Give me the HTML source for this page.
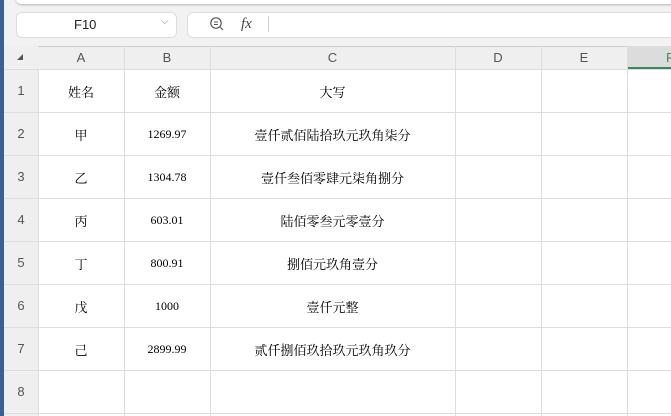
<!DOCTYPE html><html><head><meta charset="utf-8"><style>
*{margin:0;padding:0;box-sizing:border-box}
body{width:671px;height:416px;overflow:hidden;background:#f2f2f2;position:relative;font-family:"Liberation Sans",sans-serif}
.a{position:absolute}
.h{position:absolute;display:flex;align-items:center;justify-content:center;color:#555;font-size:13px}
.c{position:absolute;display:flex;align-items:center;justify-content:center;font-family:"Liberation Serif","Noto Serif CJK SC",serif;font-size:13px;color:#000;padding-top:2px}
</style></head><body>
<div class="a" style="left:0;top:0;width:4px;height:416px;background:#3d5f95"></div>
<div class="a" style="left:16px;top:-6px;width:660px;height:10px;background:#fff;border-radius:6px;box-shadow:0 1px 2px rgba(0,0,0,.25)"></div>
<div class="a" style="left:16px;top:12px;width:161px;height:26px;background:#fff;border:1px solid #ddd;border-radius:6px"></div>
<div class="a" style="left:74px;top:17px;font-size:13px;color:#222">F10</div>
<div class="a" style="left:161px;top:16px;font-size:10px;color:#888">⌵</div>
<div class="a" style="left:187px;top:12px;width:490px;height:26px;background:#fff;border:1px solid #ddd;border-radius:6px"></div>
<svg class="a" style="left:209px;top:16px" width="16" height="16" viewBox="0 0 16 16"><circle cx="7" cy="7" r="5.2" fill="none" stroke="#555" stroke-width="1.2"/><path d="M11 11l3 3M5 6h4M5 8.5h4" stroke="#555" stroke-width="1.1"/></svg>
<div class="a" style="left:241px;top:16px;font-family:'Liberation Serif',serif;font-style:italic;font-size:15px;color:#444">fx</div>
<div class="a" style="left:268px;top:16px;width:1px;height:16px;background:#ccc"></div>
<div class="a" style="left:4px;top:46px;width:667px;height:370px;background:#fff"></div>
<div class="a" style="left:4px;top:46px;width:667px;height:23px;background:#efefef;border-top:1px solid #ccc"></div>
<div class="a" style="left:4px;top:46px;width:34px;height:370px;background:#efefef"></div>
<div class="a" style="left:627px;top:46px;width:44px;height:23px;background:#dcdcdc;border-bottom:2px solid #3c8a5a"></div>
<div class="a" style="left:17px;top:54px;width:0;height:0;border-left:6px solid transparent;border-bottom:6px solid #555"></div>
<div class="h" style="left:38px;top:46px;width:86px;height:23px">A</div>
<div class="h" style="left:124px;top:46px;width:86px;height:23px">B</div>
<div class="h" style="left:210px;top:46px;width:245px;height:23px">C</div>
<div class="h" style="left:455px;top:46px;width:86px;height:23px">D</div>
<div class="h" style="left:541px;top:46px;width:86px;height:23px">E</div>
<div class="h" style="left:660px;top:46px;width:20px;height:23px;color:#3c8a5a">F</div>
<div class="a" style="left:38px;top:69px;width:1px;height:347px;background:#ddd"></div>
<div class="a" style="left:124px;top:46px;width:1px;height:370px;background:#ddd"></div>
<div class="a" style="left:210px;top:46px;width:1px;height:370px;background:#ddd"></div>
<div class="a" style="left:455px;top:46px;width:1px;height:370px;background:#ddd"></div>
<div class="a" style="left:541px;top:46px;width:1px;height:370px;background:#ddd"></div>
<div class="a" style="left:627px;top:46px;width:1px;height:370px;background:#ddd"></div>
<div class="a" style="left:4px;top:69px;width:667px;height:1px;background:#ddd"></div>
<div class="a" style="left:4px;top:112px;width:667px;height:1px;background:#ddd"></div>
<div class="a" style="left:4px;top:155px;width:667px;height:1px;background:#ddd"></div>
<div class="a" style="left:4px;top:198px;width:667px;height:1px;background:#ddd"></div>
<div class="a" style="left:4px;top:241px;width:667px;height:1px;background:#ddd"></div>
<div class="a" style="left:4px;top:284px;width:667px;height:1px;background:#ddd"></div>
<div class="a" style="left:4px;top:327px;width:667px;height:1px;background:#ddd"></div>
<div class="a" style="left:4px;top:370px;width:667px;height:1px;background:#ddd"></div>
<div class="a" style="left:4px;top:413px;width:667px;height:1px;background:#ddd"></div>
<div class="h" style="left:4px;top:69px;width:34px;height:43px">1</div>
<div class="h" style="left:4px;top:112px;width:34px;height:43px">2</div>
<div class="h" style="left:4px;top:155px;width:34px;height:43px">3</div>
<div class="h" style="left:4px;top:198px;width:34px;height:43px">4</div>
<div class="h" style="left:4px;top:241px;width:34px;height:43px">5</div>
<div class="h" style="left:4px;top:284px;width:34px;height:43px">6</div>
<div class="h" style="left:4px;top:327px;width:34px;height:43px">7</div>
<div class="h" style="left:4px;top:370px;width:34px;height:43px">8</div>
<div class="c" style="left:38px;top:69px;width:86px;height:43px">姓名</div>
<div class="c" style="left:124px;top:69px;width:86px;height:43px">金额</div>
<div class="c" style="left:210px;top:69px;width:245px;height:43px">大写</div>
<div class="c" style="left:38px;top:112px;width:86px;height:43px">甲</div>
<div class="c" style="left:124px;top:112px;width:86px;height:43px;font-size:12px">1269.97</div>
<div class="c" style="left:210px;top:112px;width:245px;height:43px">壹仟贰佰陆拾玖元玖角柒分</div>
<div class="c" style="left:38px;top:155px;width:86px;height:43px">乙</div>
<div class="c" style="left:124px;top:155px;width:86px;height:43px;font-size:12px">1304.78</div>
<div class="c" style="left:210px;top:155px;width:245px;height:43px">壹仟叁佰零肆元柒角捌分</div>
<div class="c" style="left:38px;top:198px;width:86px;height:43px">丙</div>
<div class="c" style="left:124px;top:198px;width:86px;height:43px;font-size:12px">603.01</div>
<div class="c" style="left:210px;top:198px;width:245px;height:43px">陆佰零叁元零壹分</div>
<div class="c" style="left:38px;top:241px;width:86px;height:43px">丁</div>
<div class="c" style="left:124px;top:241px;width:86px;height:43px;font-size:12px">800.91</div>
<div class="c" style="left:210px;top:241px;width:245px;height:43px">捌佰元玖角壹分</div>
<div class="c" style="left:38px;top:284px;width:86px;height:43px">戊</div>
<div class="c" style="left:124px;top:284px;width:86px;height:43px;font-size:12px">1000</div>
<div class="c" style="left:210px;top:284px;width:245px;height:43px">壹仟元整</div>
<div class="c" style="left:38px;top:327px;width:86px;height:43px">己</div>
<div class="c" style="left:124px;top:327px;width:86px;height:43px;font-size:12px">2899.99</div>
<div class="c" style="left:210px;top:327px;width:245px;height:43px">贰仟捌佰玖拾玖元玖角玖分</div>
</body></html>
